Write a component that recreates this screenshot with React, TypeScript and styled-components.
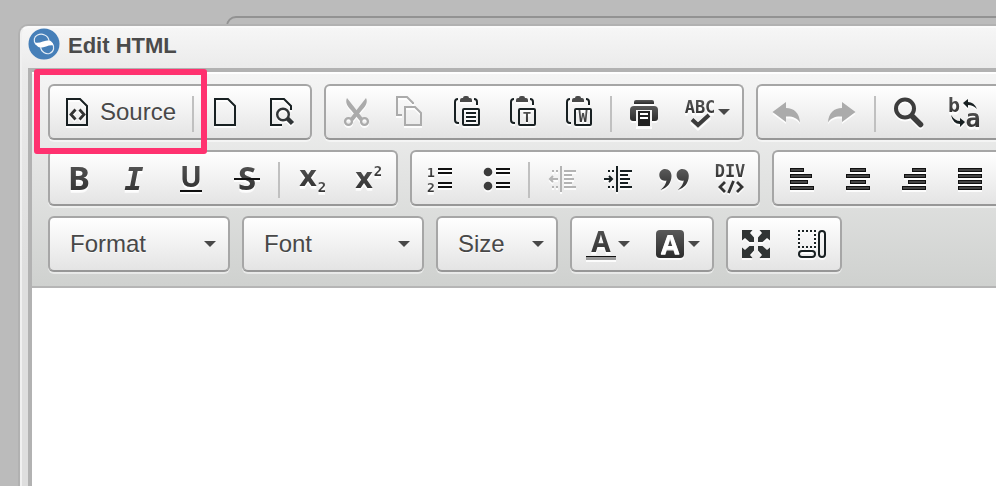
import React from "react";
import styled, { createGlobalStyle } from "styled-components";

const GlobalStyle = createGlobalStyle`
  *, *::before, *::after { box-sizing: border-box; }
  html, body, #root { height: 100%; }
  body {
    margin: 0;
    overflow: hidden;
    background: #bbbbbb;
    font-family: "Liberation Sans", Arial, Helvetica, sans-serif;
    color: #484848;
  }
`;

const Page = styled.div`
  position: relative;
  display: flex;
  min-height: 100%;
  padding: 26px 0 0 20px;
  overflow: hidden;
`;

const BackPanel = styled.div`
  position: absolute;
  top: 16px;
  left: 226px;
  right: -10px;
  height: 40px;
  border: 2px solid #929292;
  border-radius: 10px;
`;

const Dialog = styled.section`
  position: relative;
  flex: 1;
  min-width: 0;
  display: flex;
  flex-direction: column;
  padding-left: 6px;
  border: 2px solid #f0f0f0;
  border-width: 2px 0 0 2px;
  border-top: 2px solid #fafafa;
  border-top-left-radius: 8px;
  background: linear-gradient(#f6f6f6, #ebebeb 40px, #dedede 240px);
  box-shadow: 0 0 0 2px #b1b1b1;
`;

const TitleBar = styled.header`
  display: flex;
  align-items: center;
  gap: 8px;
  height: 40px;
  padding-bottom: 8px;
`;

const Title = styled.h1`
  margin: 0;
  padding-top: 4px;
  font-size: 22px;
  line-height: 28px;
  font-weight: bold;
  color: #4b4b4b;
`;

const Editor = styled.div`
  position: relative;
  flex: 1;
  display: flex;
  flex-direction: column;
  border: 4px solid #b2b2b2;
  border-width: 4px 0 0 4px;
  background: #fff;
`;

const Toolbar = styled.div`
  display: flex;
  flex-direction: column;
  gap: 10px;
  padding: 12px 0 14px 16px;
  border-bottom: 2px solid #b5b5b5;
  background: linear-gradient(#f5f5f5, #cfd1cf);
  box-shadow: inset 0 2px 0 #fff;
`;

const Row = styled.div`
  display: flex;
  gap: 12px;
`;

const Group = styled.div<{ $open?: boolean }>`
  display: flex;
  flex: ${(p) => (p.$open ? "1 0 auto" : "none")};
  height: 56px;
  border: 2px solid #a6a6a6;
  border-bottom-color: #979797;
  border-radius: 6px;
  background: linear-gradient(#ffffff, #e4e4e4);
  box-shadow: 0 2px 0 rgba(255, 255, 255, 0.5);
  ${(p) =>
    p.$open &&
    "border-right: 0; border-top-right-radius: 0; border-bottom-right-radius: 0;"}
`;

const ToolButton = styled.button`
  display: flex;
  align-items: center;
  height: 52px;
  padding: 0 12px;
  border: 0;
  background: none;
  font: inherit;
  font-size: 24px;
  line-height: 32px;
  color: #484848;
  text-shadow: 0 1px 0 rgba(255, 255, 255, 0.8);
`;

const ButtonText = styled.span`
  padding-left: 6px;
`;

const Separator = styled.span`
  width: 2px;
  margin: 10px 4px 6px;
  background: #c0c0c0;
`;

const Arrow = styled.span`
  margin-left: 2px;
  border: 6px solid transparent;
  border-top-color: #484848;
  border-bottom: 0;
`;

const Combo = styled(Group)<{ $width: number }>`
  display: grid;
  grid-template-columns: 1fr auto;
  align-items: center;
  width: ${(p) => p.$width}px;
  padding-right: 12px;
`;

const Select = styled.select`
  grid-area: 1 / 1 / 2 / 3;
  width: 100%;
  height: 52px;
  padding: 0 0 0 20px;
  border: 0;
  appearance: none;
  background: none;
  font: inherit;
  font-size: 24px;
  line-height: 32px;
  color: #484848;
  text-shadow: 0 1px 0 rgba(255, 255, 255, 0.8);
`;

const ComboArrow = styled(Arrow)`
  grid-area: 1 / 2;
  pointer-events: none;
`;

const Content = styled.div`
  flex: 1;
  min-height: 120px;
  background: #fff;
`;

const Highlight = styled.div`
  position: absolute;
  top: -3px;
  left: 2px;
  width: 173px;
  height: 85px;
  border: 6px solid #ff3270;
  border-radius: 3px;
  pointer-events: none;
`;

const Glyph = styled.svg`
  display: block;
  flex: none;
  width: 32px;
  height: 32px;
  overflow: visible;
  fill: none;
  filter: drop-shadow(0 2px 0 rgba(255, 255, 255, 0.85));
  text {
    font-family: "Noto Sans", sans-serif;
    font-weight: bold;
    text-anchor: middle;
    fill: url(#ink);
  }
  text.wide {
    font-family: "DejaVu Sans", sans-serif;
  }
  text.mono {
    font-family: "DejaVu Sans Mono", monospace;
  }
`;

const Defs = styled.svg`
  position: absolute;
  width: 0;
  height: 0;
`;

const INK = "#182022";
const DARK = "#3c3c3c";
const PALE = "#ababab";

const PAGE = "M5 3H18L25 10V29H5Z";

function Clipboard({ children }: { children: React.ReactNode }) {
  return (
    <>
      <path d="M8 3Q5 3 5 6V24Q5 27 8 27H9M24 3Q27 3 27 6V9" stroke={INK} strokeWidth="2" />
      <path d="M10 6V4Q10 2 12 2H13Q13 0 15 0H17Q19 0 19 2H20Q22 2 22 4V6Z" fill="#4a4a4a" />
      <rect x="13" y="13" width="16" height="16" rx="1" stroke={INK} strokeWidth="2" />
      {children}
    </>
  );
}

function Bars({ spans }: { spans: number[][] }) {
  return (
    <>
      {spans.map(([a, b], i) => (
        <g key={i}>
          <rect x={a} y={6 + i * 6} width={b - a} height="4" fill="#111" />
          <rect x={a + 1} y={7 + i * 6} width={b - a - 2} height="2" fill="#444" />
        </g>
      ))}
    </>
  );
}

const undoPath =
  "M2.5 16L16 6V12C24 12 29.5 17 30 26.5C27 21.500 22 20 16 20.500V26Z";

function Indent({ color, out }: { color: string; out?: boolean }) {
  return (
    <>
      <path d="M15 4V30M18 9H30M18 13H26M18 17H28M18 21H26M18 25H30" stroke={color} strokeWidth="2" />
      <path d="M6 9H8M10 9H12M6 25H8M10 25H12" stroke={color} strokeWidth="2" />
      <path
        d={out ? "M4 17H12M7 14L4 17L7 20" : "M2 17H10M7 14L10 17L7 20"}
        stroke={color}
        strokeWidth="2"
      />
    </>
  );
}

const corner = "M2 2H12.500L10 5L14 9.500V14H9.500L5 10L2 12.500Z";

const icons: Record<string, React.ReactNode> = {
  source: (
    <>
      <path d={PAGE} stroke={INK} strokeWidth="2" />
      <path d="M13.500 13.500L9 18.500L13.500 23.500M17.500 13.500L22 18.500L17.500 23.500" stroke="#333" strokeWidth="2.8" />
    </>
  ),
  newPage: <path d={PAGE} stroke={INK} strokeWidth="2" />,
  preview: (
    <>
      <path d="M16 29H5V3H18L25 10V14" stroke={INK} strokeWidth="2" />
      <circle cx="17" cy="18.500" r="5.800" stroke="#303436" strokeWidth="2.4" />
      <path d="M21.500 22.500L26.500 27.500" stroke="#303436" strokeWidth="4.500" />
    </>
  ),
  cut: (
    <>
      <path d="M9 2C7 6 9 10 13 14L22 25L25 22.500L20 16Z" fill={PALE} />
      <path d="M28 2C30 6 28 10 24 14L15 25L12 22.500L17 16Z" fill={PALE} />
      <circle cx="10.500" cy="25.500" r="3.400" stroke={PALE} strokeWidth="2.400" />
      <circle cx="26.500" cy="25.500" r="3.400" stroke={PALE} strokeWidth="2.400" />
    </>
  ),
  copy: <path d="M8 19H3V1H13L19 7V8M11 11H21L27 17V29H11Z" stroke={PALE} strokeWidth="2" />,
  paste: (
    <Clipboard>
      <path d="M16 17H26M16 21H26M16 25H26" stroke={INK} strokeWidth="2" />
    </Clipboard>
  ),
  pasteText: (
    <Clipboard>
      <text className="mono" x="21" y="26" fontSize="14">T</text>
    </Clipboard>
  ),
  pasteWord: (
    <Clipboard>
      <text className="mono" x="21" y="26" fontSize="15">W</text>
    </Clipboard>
  ),
  print: (
    <>
      <path d="M6 8V6Q6 4 8 4H24Q26 4 26 6V8Z" fill="url(#ink)" />
      <path d="M2 14Q2 10 6 10H26Q30 10 30 14V22Q30 25 27 25H5Q2 25 2 22Z" fill="url(#ink)" />
      <rect x="8" y="14" width="16" height="17" fill="#f4f4f4" />
      <rect x="10" y="15" width="12" height="15" fill="#222" />
      <path d="M12 18H20M12 22H20" stroke="#fff" strokeWidth="2" />
    </>
  ),
  spell: (
    <>
      <text className="mono" x="16" y="17" fontSize="17">ABC</text>
      <path d="M8 23.500L14 29L25 19" stroke="#f4f4f4" strokeWidth="6" />
      <path d="M8 23.500L14 29L25 19" stroke={DARK} strokeWidth="4" />
    </>
  ),
  undo: <path d={undoPath} fill={PALE} />,
  redo: <path d={undoPath} fill={PALE} transform="translate(32 0) scale(-1 1)" />,
  find: (
    <>
      <circle cx="13" cy="12.500" r="9" stroke={DARK} strokeWidth="4" />
      <path d="M20 20L28.500 28.500" stroke={DARK} strokeWidth="5.500" strokeLinecap="round" />
    </>
  ),
  replace: (
    <>
      <text className="mono" x="6" y="16" fontSize="20">b</text>
      <text className="mono" x="25" y="31" fontSize="25">a</text>
      <path d="M15 7L20 3V6Q26 6 29 13Q25 9 20 9V12Z" fill={INK} />
      <path d="M17 26L12 22V25Q7 25 3 19Q5 28 12 28V31Z" fill={INK} />
    </>
  ),
  bold: <text x="17" y="28" fontSize="33">B</text>,
  italic: <text className="mono" x="16" y="28" fontSize="32" fontStyle="italic">I</text>,
  underline: (
    <>
      <text x="17" y="25" fontSize="29">U</text>
      <path d="M6 29H28" stroke="#111" strokeWidth="2" />
    </>
  ),
  strike: (
    <>
      <text x="17" y="28" fontSize="33">S</text>
      <path d="M4 17H30" stroke="#111" strokeWidth="2" />
    </>
  ),
  subscript: (
    <>
      <text className="wide" x="12" y="24" fontSize="28">x</text>
      <text className="mono" x="26" y="30" fontSize="14">2</text>
    </>
  ),
  superscript: (
    <>
      <text className="wide" x="12" y="26" fontSize="28">x</text>
      <text className="mono" x="26" y="14" fontSize="14">2</text>
    </>
  ),
  numbered: (
    <>
      <text className="mono" x="7" y="15" fontSize="13">1</text>
      <text className="mono" x="7" y="30" fontSize="13">2</text>
      <path d="M14 7H28M14 11H28M14 21H28M14 25H28" stroke="#111" strokeWidth="2" />
    </>
  ),
  bulleted: (
    <>
      <circle cx="8" cy="10" r="4.300" fill={DARK} />
      <circle cx="8" cy="24" r="4.300" fill={DARK} />
      <path d="M16 7H30M16 11H30M16 21H30M16 25H30" stroke="#111" strokeWidth="2" />
    </>
  ),
  outdent: <Indent color="#b4b4b4" out />,
  indent: <Indent color={INK} />,
  quote: (
    <>
      <path d="M7 7C11 7 13.500 10 13.500 14C13.500 21 9 26 2.500 28C6 25 8 22 8.500 18.500C4.500 19.500 1.300 17 1.300 13C1.300 9.500 4 7 7 7Z" fill="url(#ink)" />
      <path transform="translate(17.300 0)" d="M7 7C11 7 13.500 10 13.500 14C13.500 21 9 26 2.500 28C6 25 8 22 8.500 18.500C4.500 19.500 1.300 17 1.300 13C1.300 9.500 4 7 7 7Z" fill="url(#ink)" />
    </>
  ),
  div: (
    <>
      <text className="mono" x="16" y="15" fontSize="17">DIV</text>
      <path d="M11 20L6 25L11 30M23 20L28 25L23 30M19.500 19L14.500 31" stroke="#333" strokeWidth="2.800" />
    </>
  ),
  left: <Bars spans={[[4, 18], [4, 26], [4, 22], [4, 28]]} />,
  center: <Bars spans={[[8, 24], [4, 28], [8, 24], [4, 28]]} />,
  right: <Bars spans={[[14, 28], [6, 28], [10, 28], [4, 28]]} />,
  justify: <Bars spans={[[4, 28], [4, 28], [4, 28], [4, 28]]} />,
  textColor: (
    <>
      <text x="17" y="24" fontSize="28">A</text>
      <rect x="2" y="28" width="30" height="4" fill="#999" />
      <rect x="2" y="28" width="30" height="1" fill="#111" />
    </>
  ),
  bgColor: (
    <>
      <rect x="2" y="2" width="28" height="28" rx="4" fill="url(#ink)" />
      <text x="16" y="26" fontSize="27" style={{ fill: "#fff" }}>A</text>
    </>
  ),
  maximize: (
    <>
      {[0, 90, 180, 270].map((a) => (
        <path key={a} d={corner} fill="#303434" transform={`rotate(${a} 16 16)`} />
      ))}
    </>
  ),
  blocks: (
    <>
      <path d="M2 3H20M2 19H20M3 6V18M19 6V18" stroke={INK} strokeWidth="2" strokeDasharray="2 2" />
      <rect x="3" y="23" width="16" height="6" rx="3" stroke={INK} strokeWidth="2" />
      <rect x="23" y="3" width="6" height="26" rx="3" stroke={INK} strokeWidth="2" />
    </>
  ),
};

function Tool({ icon, label, menu, text }: { icon: string; label: string; menu?: boolean; text?: string }) {
  return (
    <ToolButton type="button" aria-label={label}>
      <Glyph viewBox="0 0 32 32" aria-hidden="true">{icons[icon]}</Glyph>
      {text && <ButtonText>{text}</ButtonText>}
      {menu && <Arrow />}
    </ToolButton>
  );
}

function Picker({ label, width }: { label: string; width: number }) {
  return (
    <Combo $width={width}>
      <Select aria-label={label} defaultValue={label}>
        <option>{label}</option>
      </Select>
      <ComboArrow />
    </Combo>
  );
}

function Logo() {
  return (
    <svg width="32" height="32" viewBox="0 0 32 32" aria-hidden="true">
      <circle cx="16" cy="16" r="15.500" fill="#467fb8" />
      <g fill="none" stroke="#e4edf6" strokeWidth="1.200">
        <path d="M8 16.500C5 13 6 8.500 9.500 7C14 5 20 7 21 12.500" />
        <path d="M12.500 19.500C13.500 24 17.500 26.500 21.500 25.500C26 24 27 19 24 15" />
      </g>
      <path d="M7 14.500C11 16 16 12.500 21 12.300C23.500 13 25 15 25.500 17.500C21 16.500 17 19.500 12.500 19.700C9.500 19 7.500 17 7 14.500Z" fill="#fff" />
    </svg>
  );
}

export default function App() {
  return (
    <>
      <GlobalStyle />
      <Page>
        <Defs aria-hidden="true">
          <defs>
            <linearGradient id="ink" x1="0" y1="0" x2="0" y2="1">
              <stop offset="0" stopColor="#5a5a5a" />
              <stop offset="1" stopColor="#2c2c2c" />
            </linearGradient>
          </defs>
        </Defs>
        <BackPanel />
        <Dialog aria-label="Edit HTML">
          <TitleBar>
            <Logo />
            <Title>Edit HTML</Title>
          </TitleBar>
          <Editor>
            <Toolbar role="toolbar">
              <Row>
                <Group>
                  <Tool icon="source" label="Source" text="Source" />
                  <Separator />
                  <Tool icon="newPage" label="New Page" />
                  <Tool icon="preview" label="Preview" />
                </Group>
                <Group>
                  <Tool icon="cut" label="Cut" />
                  <Tool icon="copy" label="Copy" />
                  <Tool icon="paste" label="Paste" />
                  <Tool icon="pasteText" label="Paste as plain text" />
                  <Tool icon="pasteWord" label="Paste from Word" />
                  <Separator />
                  <Tool icon="print" label="Print" />
                  <Tool icon="spell" label="Spell Check" menu />
                </Group>
                <Group $open>
                  <Tool icon="undo" label="Undo" />
                  <Tool icon="redo" label="Redo" />
                  <Separator />
                  <Tool icon="find" label="Find" />
                  <Tool icon="replace" label="Replace" />
                </Group>
              </Row>
              <Row>
                <Group>
                  <Tool icon="bold" label="Bold" />
                  <Tool icon="italic" label="Italic" />
                  <Tool icon="underline" label="Underline" />
                  <Tool icon="strike" label="Strike Through" />
                  <Separator />
                  <Tool icon="subscript" label="Subscript" />
                  <Tool icon="superscript" label="Superscript" />
                </Group>
                <Group>
                  <Tool icon="numbered" label="Numbered List" />
                  <Tool icon="bulleted" label="Bulleted List" />
                  <Separator />
                  <Tool icon="outdent" label="Decrease Indent" />
                  <Tool icon="indent" label="Increase Indent" />
                  <Tool icon="quote" label="Block Quote" />
                  <Tool icon="div" label="Div Container" />
                </Group>
                <Group $open>
                  <Tool icon="left" label="Align Left" />
                  <Tool icon="center" label="Center" />
                  <Tool icon="right" label="Align Right" />
                  <Tool icon="justify" label="Justify" />
                </Group>
              </Row>
              <Row>
                <Picker label="Format" width={182} />
                <Picker label="Font" width={182} />
                <Picker label="Size" width={122} />
                <Group>
                  <Tool icon="textColor" label="Text Color" menu />
                  <Tool icon="bgColor" label="Background Color" menu />
                </Group>
                <Group>
                  <Tool icon="maximize" label="Maximize" />
                  <Tool icon="blocks" label="Show Blocks" />
                </Group>
              </Row>
            </Toolbar>
            <Content />
            <Highlight />
          </Editor>
        </Dialog>
      </Page>
    </>
  );
}
